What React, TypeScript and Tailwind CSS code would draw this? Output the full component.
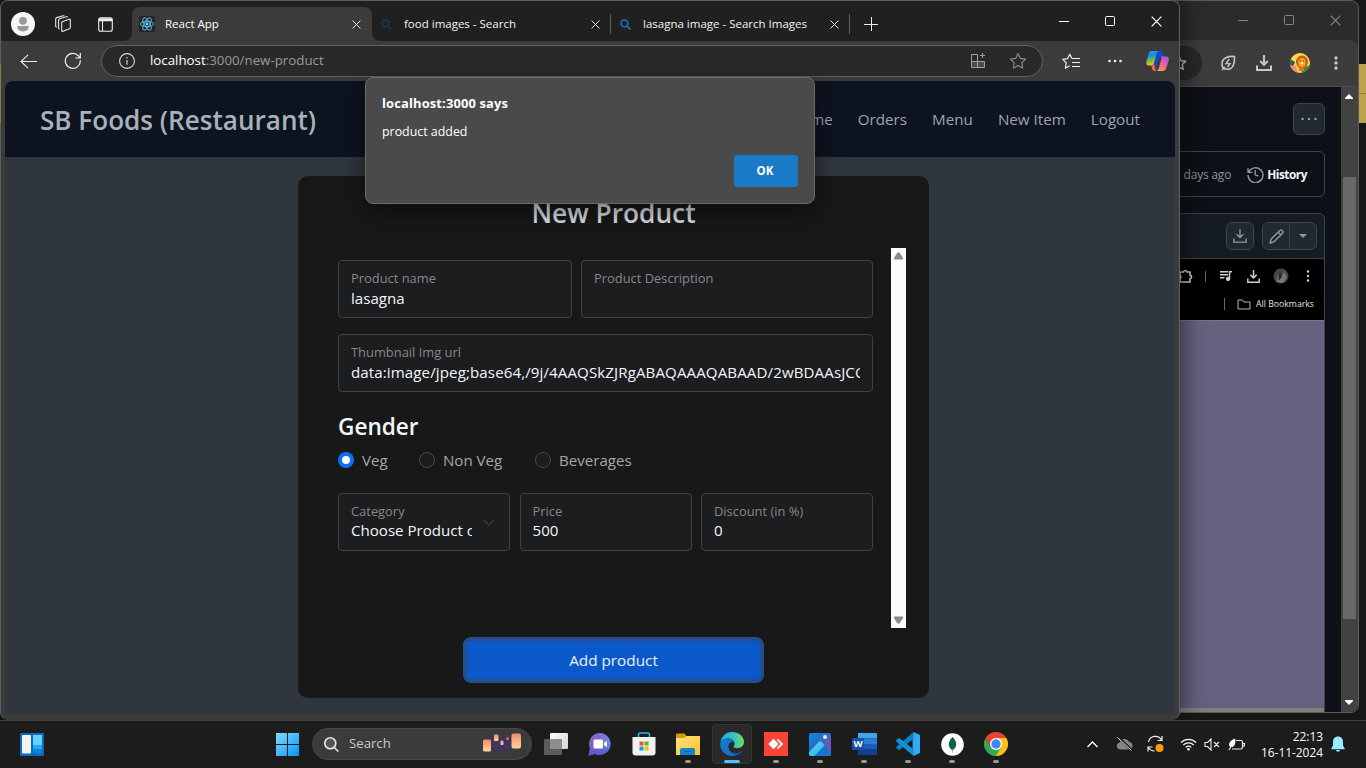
import React from "react";

type Kids = { children?: React.ReactNode };

const Cell = ({ w, children }: { w: string } & Kids) => (
  <div className={`${w} flex h-full shrink-0 items-center justify-center`}>{children}</div>
);

const Cross = ({ size = 10, color = "#e8e8e8" }: { size?: number; color?: string }) => (
  <svg width={size} height={size} viewBox="0 0 10 10" stroke={color} strokeWidth="1.1" fill="none">
    <path d="M.6.6l8.8 8.8M9.4.6L.6 9.4" />
  </svg>
);

const Magnifier = ({ color }: { color: string }) => (
  <svg width="11" height="11" viewBox="0 0 11 11" stroke={color} fill="none" strokeWidth="1.6">
    <circle cx="4.4" cy="4.4" r="3.4" />
    <path d="M7 7l3.4 3.4" />
  </svg>
);

const ReactLogo = () => (
  <svg width="16" height="16" viewBox="0 0 16 16">
    <rect width="16" height="16" rx="2" fill="#222428" />
    <g fill="none" stroke="#56b9d3" strokeWidth="1">
      <ellipse cx="8" cy="8" rx="6.8" ry="2.6" />
      <ellipse cx="8" cy="8" rx="6.8" ry="2.6" transform="rotate(60 8 8)" />
      <ellipse cx="8" cy="8" rx="6.8" ry="2.6" transform="rotate(120 8 8)" />
    </g>
    <circle cx="8" cy="8" r="1.4" fill="#61dafb" />
  </svg>
);

const Star = ({ color, size = 18, sw = 1.1 }: { color: string; size?: number; sw?: number }) => (
  <svg className="shrink-0" width={size} height={size} viewBox="0 0 18 18" fill="none" stroke={color} strokeWidth={sw} strokeLinejoin="round">
    <path d="M9 1.5l2.3 4.9 5.3.7-3.9 3.7 1 5.4L9 13.6l-4.7 2.6 1-5.4L1.4 7.1l5.3-.7z" />
  </svg>
);

const Dots = ({ color, vertical = false, gap = 5, r = 1.2 }: { color: string; vertical?: boolean; gap?: number; r?: number }) => (
  <svg width="18" height="18" viewBox="0 0 18 18" fill={color}>
    {[-gap, 0, gap].map((d) => (
      <circle key={d} cx={vertical ? 9 : 9 + d} cy={vertical ? 9 + d : 9} r={r} />
    ))}
  </svg>
);

const Download = ({ color, size = 16, sw = 1.7 }: { color: string; size?: number; sw?: number }) => (
  <svg width={size} height={size} viewBox="0 0 16 16" fill="none" stroke={color} strokeWidth={sw}>
    <path d="M8 0v9.6M4.2 6L8 9.8 11.8 6M1 10.5V15h14v-4.5" />
  </svg>
);

const WindowControls = ({ color }: { color: string }) => (
  <div className="flex h-[40px]">
    <Cell w="w-[46px]">
      <svg width="10" height="10" stroke={color}><path d="M0 5.5h10" /></svg>
    </Cell>
    <Cell w="w-[46px]">
      <svg width="10" height="10" fill="none" stroke={color}><rect x=".5" y=".5" width="9" height="9" rx="1" /></svg>
    </Cell>
    <Cell w="w-[46px]"><Cross color={color} size={11} /></Cell>
  </div>
);

const Copilot = () => (
  <svg width="23" height="22" viewBox="0 0 23 22">
    <defs>
      <linearGradient id="cpA" x1="0" y1="0" x2=".2" y2="1">
        <stop offset="0" stopColor="#15a0f0" /><stop offset=".35" stopColor="#1c8ddb" />
        <stop offset=".65" stopColor="#66b85c" /><stop offset="1" stopColor="#f5c400" />
      </linearGradient>
      <linearGradient id="cpB" x1=".8" y1="0" x2=".2" y2="1">
        <stop offset="0" stopColor="#a25ae8" /><stop offset=".5" stopColor="#ee5c9b" /><stop offset="1" stopColor="#ff9a52" />
      </linearGradient>
    </defs>
    <path d="M7 1h7.500c1.800 0 2.500 1 3 3l.6 2.500h-2c-2 0-3 1-3.500 2.700l-2.400 8.600C9.500 19 9 19.700 8 20z" fill="#1747c8" />
    <path d="M5.500 1H13c-1.600.4-2 1.500-2.500 3.100L8 13c-.6 2-1.500 2.500-3 2.500H2.500C.5 15.500-.1 13.500.5 11.300l2-7C3.100 2.200 4 1 5.500 1z" fill="url(#cpA)" />
    <path d="M5.500 15.500c1.500 0 2-1 2.500-2.300L9 18c.4 1.700 1 3 2 3H9c-2 0-2.700-1.200-3.200-3z" fill="#f0663d" />
    <path d="M16 6.500h4.500c2 0 2.800 1.800 2.200 4l-2.200 7C19.800 19.800 18.800 21 17 21h-6.500c1.500-.4 2-1.400 2.400-2.900l2.400-9c.3-1.400.2-2.200-1.300-2.600z" fill="url(#cpB)" />
  </svg>
);

const Tab = ({ icon, title, w }: { icon: React.ReactNode; title: string; w: string }) => (
  <div className={`${w} flex h-full shrink-0 items-center`}>
    <div className="flex w-[29px] shrink-0 justify-center">{icon}</div>
    <span className="ml-[3px] flex-1 whitespace-nowrap text-[11.500px] text-[#f2f2f2]">{title}</span>
    <Cross size={9} />
    <div className="ml-[10px] h-[20px] w-px bg-[#5e5e5e]" />
  </div>
);

const TabStrip = () => (
  <div className="flex h-[40px] shrink-0 items-start bg-[#202020]">
    <div className="flex h-[40px] items-center pl-[2px] pt-[6px]">
      <Cell w="w-[40px]">
        <svg width="24" height="24" viewBox="0 0 24 24">
          <circle cx="12" cy="12" r="12" fill="#f6f6f6" />
          <circle cx="12" cy="8.800" r="3.900" fill="#999" />
          <path d="M6.300 14h11.400c0 3.500-2 5.400-5.700 5.400S6.300 17.500 6.300 14z" fill="#999" />
        </svg>
      </Cell>
      <Cell w="w-[40px]">
        <svg width="18" height="18" viewBox="0 0 18 18" fill="none" stroke="#e6e6e6" strokeWidth="1.100" strokeLinejoin="round">
          <path d="M8.300 6.700l6.800-2.500c.7-.2 1.200.1 1.200.8v7.500c0 .6-.3 1-.9 1.200l-6.400 2.600c-.8.3-1.300 0-1.300-.8V7.800c0-.6.2-.9.600-1.100z" />
          <path d="M5.500 14l-.9-.6V5.100c0-.7.300-1.100.9-1.300L12.300 1.700c.6-.2 1 0 1.200.5" />
          <path d="M2.800 12.300l-1.100-.7V3.900c0-.7.300-1.100.9-1.300L9 .8c.6-.2 1.100 0 1.300.5" />
        </svg>
      </Cell>
      <Cell w="w-[44px]">
        <svg width="15" height="15" viewBox="0 0 15 15" fill="none" stroke="#f0f0f0">
          <rect x=".7" y=".7" width="13.600" height="13.600" rx="2" strokeWidth="1.100" />
          <path d="M1 2.700h13" strokeWidth="3" />
          <path d="M4.500 4v10" strokeWidth="1.100" />
        </svg>
      </Cell>
      <div className="w-[5px]" />
    </div>
    <div className="relative mt-[6px] flex h-[34px] w-[240px] shrink-0 items-center rounded-t-lg bg-[#3b3b3b]">
      <svg className="absolute -left-2 bottom-0" width="8" height="8"><path d="M8 0v8H0a8 8 0 0 0 8-8z" fill="#3b3b3b" /></svg>
      <svg className="absolute -right-2 bottom-0" width="8" height="8"><path d="M0 0v8h8a8 8 0 0 1-8-8z" fill="#3b3b3b" /></svg>
      <div className="ml-[7px]"><ReactLogo /></div>
      <span className="ml-[10px] flex-1 text-[11.500px] text-white">React App</span>
      <div className="mr-[11px]"><Cross size={9} /></div>
    </div>
    <div className="flex h-[40px] items-center pt-[6px]">
      <Tab w="w-[239px]" icon={<Magnifier color="#173d61" />} title="food images - Search" />
      <Tab w="w-[239px]" icon={<Magnifier color="#1677cf" />} title="lasagna image - Search Images" />
      <Cell w="w-[42px]">
        <svg width="14" height="14" stroke="#eee"><path d="M0 7.500h14M7.500 0v14" /></svg>
      </Cell>
    </div>
    <div className="ml-auto flex"><WindowControls color="#fff" /></div>
  </div>
);

const Toolbar = () => (
  <div className="flex h-[40px] shrink-0 items-center bg-[#3b3b3b]">
    <Cell w="w-[54px]">
      <svg width="17" height="15" viewBox="0 0 17 15" fill="none" stroke="#eee" strokeWidth="1.100">
        <path d="M17 7.500H1M8 .8L1 7.500l7 6.700" />
      </svg>
    </Cell>
    <Cell w="w-[36px]">
      <svg width="18" height="18" viewBox="0 0 18 18" fill="none" stroke="#eee" strokeWidth="1.200">
        <path d="M16.300 8.300A7.500 7.500 0 1 1 14.500 4L16 5.700M16.300 1v5h-5" />
      </svg>
    </Cell>
    <div className="ml-[10px] flex h-[32px] w-[942px] shrink-0 items-center rounded-full border border-[#636363] bg-[#292929]">
      <svg className="ml-[17px]" width="16" height="16" viewBox="0 0 16 16" fill="none" stroke="#ddd" strokeWidth="1.100">
        <circle cx="8" cy="8" r="7.400" /><path d="M8 7v4.800" /><path d="M8 4v1.500" />
      </svg>
      <span className="ml-[15px] flex-1 text-[13.300px] text-[#9a9a9a]"><span className="text-white">localhost</span>:3000/new-product</span>
      <svg width="16" height="16" viewBox="0 0 16 16" fill="none" stroke="#a0a0a0">
        <path d="M7.500 1.500h-6v13h13v-6h-13M7.500 1.500v13M12.500 0v5M10 2.500h5" />
        <rect x="2" y="9" width="12" height="5" fill="#4b4b4b" stroke="none" />
        <path d="M7.500 8.500v6" />
      </svg>
      <div className="ml-[23px] mr-[15px]"><Star color="#8b8b8b" /></div>
    </div>
    <Cell w="w-[56px]">
      <svg width="18" height="17" viewBox="0 0 18 17" fill="none" stroke="#f0f0f0" strokeWidth="1.200" strokeLinejoin="round">
        <path d="M10 5.500L7.800 1.200 5.500 5.700l-4.700.7 3.400 3.300-.8 5.500 4.300-2.500M10 5.500h8M10 9.500h8M10 13.500h8" />
      </svg>
    </Cell>
    <Cell w="w-[32px]"><Dots color="#f0f0f0" gap={5.500} r={1.300} /></Cell>
    <Cell w="w-[48px]"><div className="ml-[4px]"><Copilot /></div></Cell>
  </div>
);

type FieldProps = { label: string; value?: string; w: string; select?: boolean; tight?: boolean; wide?: boolean };

const Field = ({ label, value, w, select = false, tight = false, wide = false }: FieldProps) => (
  <div className={`${w} flex h-[58px] items-center rounded-[4px] border border-[#3f4245] bg-[#1c1d1f] px-[12px]`}>
    <div className="h-full min-w-0 flex-1 overflow-hidden whitespace-nowrap pt-[7px]">
      <div className={`${tight ? "h-[19px]" : "h-[20px]"} text-[12.900px] leading-[20px] text-[#85888b]`}>{label}</div>
      <div className={`${wide ? "tracking-[0.100px]" : ""} h-[22px] overflow-hidden text-[15.100px] leading-[21px] text-[#f3f6f9]`}>{value}</div>
    </div>
    {select && (
      <svg className="ml-[11px] mr-[2px]" width="12" height="7" viewBox="0 0 12 7" fill="none" stroke="#393c40" strokeWidth="1.400">
        <path d="M.8.8L6 6 11.200.8" />
      </svg>
    )}
  </div>
);

const Radio = ({ label, on = false, w }: { label: string; on?: boolean; w: string }) => (
  <label className={`${w} flex items-center gap-[8px] whitespace-nowrap text-[15.100px] text-[#a2a8ae]`}>
    <span className={on ? "flex size-4 items-center justify-center rounded-full bg-[#0d6efd]" : "flex size-4 rounded-full border border-[#45484b] bg-[#1c1d1f]"}>
      {on && <span className="size-2 rounded-full bg-white" />}
    </span>
    {label}
  </label>
);

const ProductForm = () => (
  <div className="flex h-[522px] w-[631px] flex-col items-center rounded-[10px] bg-[#181818]">
    <h2 className="mt-[18px] h-[38px] text-[26.300px] font-semibold leading-[38px] text-[#dee2e6]">New Product</h2>
    <div className="mt-[16px] flex w-full pl-[40px]">
      <div className="w-[535px] pt-[12px]">
        <div className="flex justify-between">
          <Field label="Product name" value="lasagna" w="w-[234px]" />
          <Field label="Product Description" w="w-[292px]" />
        </div>
        <div className="mt-[16px] flex">
          <Field label="Thumbnail Img url" value="data:image/jpeg;base64,/9j/4AAQSkZJRgABAQAAAQABAAD/2wBDAAsJCQcJ" w="w-full" wide />
        </div>
        <h3 className="mt-[20px] h-[30px] text-[22.600px] font-semibold leading-[30px] text-[#f3f6f9]">Gender</h3>
        <div className="mt-[6px] flex h-[24px] items-center">
          <Radio label="Veg" on w="w-[81px]" />
          <Radio label="Non Veg" w="w-[116px]" />
          <Radio label="Beverages" w="w-[120px]" />
        </div>
        <div className="mt-[21px] flex justify-between">
          <Field label="Category" value="Choose Product category" w="w-[172px]" select tight />
          <Field label="Price" value="500" w="w-[172px]" tight />
          <Field label="Discount (in %)" value="0" w="w-[172px]" tight />
        </div>
      </div>
      <div className="ml-[18px] flex h-[380px] w-[15px] flex-col items-center justify-between bg-[#fcfcfc] py-[4px]">
        <svg width="9" height="8"><path d="M3.500.5h2L9 6v1.500H0V6z" fill="#8b8b8b" /></svg>
        <svg width="9" height="8"><path d="M3.500 7.500h2L9 2V.5H0V2z" fill="#8b8b8b" /></svg>
      </div>
    </div>
    <button className="mt-[9px] h-[46px] w-[301px] rounded-[8px] border-4 border-[#254e8c] bg-[#0a58ca] text-[15.300px] text-[#eaf1fb]">Add product</button>
  </div>
);

const Alert = () => (
  <div className="absolute left-[364px] top-[76px] flex h-[127px] w-[450px] flex-col rounded-[8px] border border-[#6b6b6b] bg-[#4a4a4a] px-[16px] text-[12.400px] text-white shadow-[0_8px_24px_rgba(0,0,0,0.5)]">
    <div className="mt-[15px] h-[20px] text-[12.900px] font-bold leading-[20px] tracking-[0.150px]">localhost:3000 says</div>
    <div className="mt-[9px] h-[20px] leading-[20px]">product added</div>
    <button className="mt-[13px] h-[32px] w-[64px] self-end rounded-[3px] bg-[#1b7ac5] pr-[2px] text-[11.500px] font-bold">OK</button>
  </div>
);

const EdgeWindow = () => (
  <section className="absolute left-0 top-0 flex h-[720px] w-[1180px] flex-col rounded-[8px] border border-[#5f5f5f] border-b-[#3b3b3b] bg-[#3b3b3b] shadow-[4px_0_22px_rgba(0,0,0,0.5)]">
    <div className="flex flex-col overflow-hidden rounded-t-[7px]">
      <TabStrip />
      <Toolbar />
    </div>
    <main className="mx-[4px] flex h-[634px] flex-col overflow-hidden rounded-[8px] bg-[#30363d]">
      <header className="flex h-[76px] shrink-0 items-center justify-between bg-[#0d131f] pl-[35px] pr-[35px]">
        <h1 className="pt-[3px] text-[26.100px] font-semibold text-[#a9b1ba]">SB Foods (Restaurant)</h1>
        <nav className="flex gap-[25px] text-[15.200px] text-[#9ca4ae]">
          <a>Home</a><a>Orders</a><a>Menu</a><a>New Item</a><a>Logout</a>
        </nav>
      </header>
      <div className="flex pl-[293px] pt-[19px]"><ProductForm /></div>
    </main>
    <Alert />
  </section>
);

const LionAvatar = () => (
  <svg width="20" height="20" viewBox="0 0 20 20">
    <defs><clipPath id="lc"><circle cx="10" cy="10" r="10" /></clipPath></defs>
    <g clipPath="url(#lc)">
      <rect width="20" height="20" fill="#ffd45a" />
      <path d="M0 6l5 3-2 5-3-1z" fill="#17683c" /><path d="M0 12l6 1 2 7H0z" fill="#ef8c85" />
      <path d="M13 15l7-3v8h-9z" fill="#2f8a46" />
      <ellipse cx="12" cy="9" rx="6" ry="6.500" fill="#c65f08" />
      <ellipse cx="12" cy="9.500" rx="3.700" ry="4.500" fill="#f4a51f" />
      <path d="M10.500 9h3L12 12z" fill="#fff" /><path d="M10 8h1M13 8h1" stroke="#432" />
      <path d="M9 15h5v3H9z" fill="#df7a0b" />
    </g>
  </svg>
);

const ChromeWindow = () => (
  <section className="absolute left-[1100px] top-0 flex h-[713px] w-[259px] flex-col overflow-hidden rounded-[8px] border border-[#5c5c5c] bg-[#2b2b2b]">
    <div className="flex h-[39px] shrink-0 justify-end"><div className="-mt-px"><WindowControls color="#858585" /></div></div>
    <div className="flex h-[47px] shrink-0 items-center rounded-t-[8px] border-b border-[#4d4d4d] bg-[#3c3c3c]">
      <div className="flex h-[34px] w-[101px] items-center justify-end rounded-full bg-[#282828] pr-[15px]"><Star color="#c7c7c7" size={16} sw={1.600} /></div>
      <Cell w="w-[52px]">
        <svg width="16" height="16" viewBox="0 0 16 16" fill="none" stroke="#c7c7c7" strokeWidth="1.600">
          <path d="M14.500 1.500C8 1 2 3 2 9c0 3 2 5.300 5.400 5.300 5.800 0 7.400-5.800 7.100-12.800zM2 15l3-3" />
          <path d="M9.200 4L6 8.600h4L7.500 12" strokeWidth="1.400" />
        </svg>
      </Cell>
      <div className="w-[1px]" />
      <Cell w="w-[18px]"><Download color="#c7c7c7" sw={2} /></Cell>
      <Cell w="w-[54px]"><LionAvatar /></Cell>
      <Cell w="w-[18px]"><Dots color="#c7c7c7" vertical r={1.700} /></Cell>
    </div>
    <div className="flex flex-1 bg-[#0d1117]">
      <div className="flex w-[240px] shrink-0 flex-col pr-[16px] pt-[16px]">
        <div className="flex size-[32px] items-center justify-center self-end rounded-[6px] border border-[#3d444d] bg-[#212830]"><Dots color="#9198a1" gap={6.500} r={1.300} /></div>
        <div className="mt-[16px] flex h-[46px] items-center justify-end rounded-[6px] border border-[#3d444d] pr-[17px] text-[11.900px]">
          <span className="mr-[16px] pt-px tracking-[-0.150px] text-[#8b929b]">days ago</span>
          <svg width="17" height="17" viewBox="0 0 16 16" fill="none" stroke="#8b929b" strokeWidth="1.400">
            <path d="M1.500 6A7 7 0 1 1 1 8.500M1 2v4h4M7.800 4v4.300l3 1.200" />
          </svg>
          <span className="ml-[3px] pt-px font-bold tracking-[-0.500px] text-[#f0f6fc]">History</span>
        </div>
        <div className="mt-[16px] flex h-[500px] flex-col rounded-t-[6px] border border-[#3d444d] bg-[#151b23]">
          <div className="flex h-[45px] shrink-0 items-center justify-end border-b border-[#3d444d] pr-[7px]">
            <div className="flex size-[28px] items-center justify-center rounded-[6px] border border-[#3d444d] bg-[#212830]"><Download color="#9198a1" size={14} sw={1.500} /></div>
            <div className="ml-[8px] flex h-[28px] w-[55px] rounded-[6px] border border-[#3d444d] bg-[#212830]">
              <div className="flex w-[27px] items-center justify-center border-r border-[#3d444d]">
                <svg width="15" height="15" viewBox="0 0 15 15" fill="none" stroke="#9198a1" strokeWidth="1.400" strokeLinejoin="round">
                  <path d="M1 14l1.200-4L10.800 1.400a1.500 1.500 0 0 1 2.200 0l.6.6a1.500 1.500 0 0 1 0 2.200L5 12.800zM9 3l3 3" />
                </svg>
              </div>
              <div className="flex flex-1 items-center justify-center"><svg width="8" height="4"><path d="M0 0h8L4 4z" fill="#9198a1" /></svg></div>
            </div>
          </div>
          <div className="flex h-[61px] shrink-0 flex-col rounded-tr-[4px] bg-black">
            <div className="flex h-[34px] items-center justify-end pr-[7px]">
              <svg width="14" height="14" viewBox="0 0 14 14" fill="none" stroke="#cfcfcf" strokeWidth="1.500">
                <path d="M1 4V3h3.500a1.800 1.800 0 0 1 3.500 0h3v3.200a1.600 1.600 0 0 1 0 3.200V13H1V9.500a1.700 1.700 0 0 0 0-3z" />
              </svg>
              <div className="ml-[12px] mr-[14px] h-[11px] w-px bg-[#666]" />
              <svg width="12" height="12" viewBox="0 0 12 12" fill="none" stroke="#cfcfcf" strokeWidth="1.500">
                <path d="M0 1.700h8M0 4.700h8M0 7.700h4.500M9.500 9V1.700H12" /><circle cx="8" cy="9" r="1.400" fill="#cfcfcf" />
              </svg>
              <div className="ml-[15px]"><Download color="#cfcfcf" size={13} sw={1.800} /></div>
              <svg className="ml-[13px] mr-[10px]" width="16" height="16">
                <circle cx="8" cy="8" r="7.500" fill="#474747" /><path d="M3 14l2-7 3 3 3-6 3 5-4 6z" fill="#777" /><path d="M7 3l2 6-4 4z" fill="#292929" />
              </svg>
              <Dots color="#cfcfcf" vertical gap={4.500} r={1.200} />
            </div>
            <div className="flex h-[22px] items-center justify-end pr-[10px] text-[8.700px] text-[#e2e2e2]">
              <div className="mr-[12px] h-[12px] w-px bg-[#666]" />
              <svg width="14" height="11" viewBox="0 0 14 11" fill="none" stroke="#b5b5b5"><path d="M1 1h4.500l1.500 2h6v7H1z" /></svg>
              <span className="ml-[5px] pt-px">All Bookmarks</span>
            </div>
          </div>
          <div className="h-[388px] shrink-0 border-t border-[#777] bg-[#66617f]" />
          <div className="h-[5px] bg-[#7f7f7f]" />
        </div>
      </div>
      <div className="flex flex-1 flex-col items-center bg-[#424242] pt-[7px]">
        <svg className="mr-[2px]" width="8" height="5"><path d="M4 0l4 4v1H0V4z" fill="#fff" /></svg>
        <div className="mt-[78px] h-[442px] w-[13px] bg-[#686868]" />
        <svg className="mr-[2px] mt-[81px]" width="8" height="5"><path d="M4 5l4-4V0H0v1z" fill="#fff" /></svg>
      </div>
    </div>
  </section>
);

const TaskItem = ({ children, running = false, active = false }: { running?: boolean; active?: boolean } & Kids) => (
  <div className="flex h-[46px] w-[44px] shrink-0 items-center justify-center">
    <div className={active ? "relative flex size-[40px] items-center justify-center rounded-[4px] border border-[#343434] bg-[#292929]" : "relative flex size-[40px] items-center justify-center"}>
      {children}
      {running && <span className={active ? "absolute bottom-0 h-[3px] w-[16px] rounded-full bg-[#4cc2ff]" : "absolute bottom-px h-[3px] w-[6px] rounded-full bg-[#999]"} />}
    </div>
  </div>
);

const TaskApps = () => (
  <>
    <TaskItem>
      <svg width="24" height="22"><defs><linearGradient id="tv" x1="0" y1="0" x2="1" y2="1"><stop stopColor="#fff" /><stop offset="1" stopColor="#d2d2d2" /></linearGradient></defs>
        <rect x="6" width="18" height="16" rx="1" fill="url(#tv)" /><rect y="6" width="18" height="16" rx="1" fill="#5b5b5b" /><path d="M6 6h12v10H6z" fill="#8d8d8d" /></svg>
    </TaskItem>
    <TaskItem>
      <svg width="24" height="24" viewBox="0 0 24 24"><defs><linearGradient id="tm" x1="0" y1="0" x2="1" y2="0"><stop stopColor="#9160bb" /><stop offset=".5" stopColor="#7a70cb" /><stop offset="1" stopColor="#6d8ce1" /></linearGradient><linearGradient id="tn" x1="0" y1="0" x2="0" y2="1"><stop offset=".4" stopColor="#5558d0" stopOpacity="0" /><stop offset="1" stopColor="#5558d0" /></linearGradient></defs>
        <path d="M12 1a11 11 0 1 1-5 21L.5 23.500l1.500-7A11 11 0 0 1 12 1z" fill="url(#tm)" /><path d="M12 1a11 11 0 1 1-5 21L.5 23.500l1.500-7A11 11 0 0 1 12 1z" fill="url(#tn)" />
        <rect x="5.500" y="7.500" width="9.500" height="9" rx="1.500" fill="#fff" /><path d="M16 11l2.800-2.300v6.600L16 13z" fill="#fff" /></svg>
    </TaskItem>
    <TaskItem>
      <svg width="24" height="24" viewBox="0 0 24 24"><path d="M6.500 6V2.500c0-1 .5-1.500 1.500-1.500h8c1 0 1.500.5 1.500 1.500V6" fill="none" stroke="#2eb4ea" strokeWidth="1.600" />
        <path d="M.5 5h23v15.500c0 2-1 3-3 3h-17c-2 0-3-1-3-3z" fill="#f1f1f1" />
        <path d="M7.500 9.500h4v4h-4z" fill="#f25022" /><path d="M12.500 9.500h4v4h-4z" fill="#6bb700" /><path d="M7.500 14.500h4v4h-4z" fill="#00a4ef" /><path d="M12.500 14.500h4v4h-4z" fill="#ffb900" /></svg>
    </TaskItem>
    <TaskItem running>
      <svg width="24" height="22"><defs><linearGradient id="fe" x1="0" y1="0" x2="1" y2="1"><stop stopColor="#ffe184" /><stop offset="1" stopColor="#ffc32a" /></linearGradient></defs>
        <path d="M0 2c0-1 .5-1.500 1.500-1.500h7L10.500 3v4H0z" fill="#d99b06" /><path d="M0 5h8l2.500-2H24v19H0z" fill="url(#fe)" /><path d="M4 22v-5c0-1.500 1-2 2-2h11c1.500 0 2 .5 2 2v5z" fill="#1386d3" /><path d="M8 18.500h7" stroke="#085da8" /></svg>
    </TaskItem>
    <TaskItem running active>
      <svg width="24" height="24" viewBox="0 0 24 24"><defs><linearGradient id="ea" x1="0" y1="0" x2="1" y2="0"><stop stopColor="#20a9e8" /><stop offset=".6" stopColor="#36c6bd" /><stop offset="1" stopColor="#70e050" /></linearGradient><linearGradient id="eb" x1="0" y1="0" x2="1" y2="1"><stop stopColor="#1683d8" /><stop offset="1" stopColor="#0d57a4" /></linearGradient></defs>
        <path d="M.3 11C1 4.500 6 0 12 0c7 0 12 5 12 9.800 0 4-3 6.400-6.700 6.400-2.300 0-3.800-.7-3.800-1.700 0-.7 1.100-1.200 1.100-3C14.600 8.500 11.500 6.500 8 6.500 4.500 6.500 1.500 8 .3 11z" fill="url(#ea)" />
        <path d="M.3 11C1.500 8 4.600 6.500 8 6.500c3.500 0 6.600 2 6.600 5-.6-1.200-1.600-1.800-2.800-1.600-3 .4-4.400 4-2.600 7.600 2.300 4.500 8 5 13.500 1.300C20.600 22 16.800 24 12.500 24 5 24-.6 18 .3 11z" fill="url(#eb)" />
        <path d="M8 10.500c-2.500 4.500.5 10.500 7 12.800-6.500 2-13-3-13-8.300C2 12 5 10.300 8 10.500z" fill="#1979c9" opacity=".6" /></svg>
    </TaskItem>
    <TaskItem running>
      <svg width="24" height="24"><rect width="24" height="24" fill="#f94336" /><path d="M9.500 6.800l5.200 5.200-5.200 5.200L4.300 12z" fill="#fff" /><path d="M13.300 7.300L18 12l-4.700 4.700" fill="none" stroke="#fff" strokeWidth="1.800" /></svg>
    </TaskItem>
    <TaskItem running>
      <svg width="22" height="23" viewBox="0 0 22 23"><defs><linearGradient id="ph" x1="0" y1="0" x2="1" y2="1"><stop stopColor="#0d86dd" /><stop offset=".4" stopColor="#2670ca" /><stop offset=".7" stopColor="#7b51b5" /></linearGradient><linearGradient id="pi" x1="0" y1="0" x2="1" y2="1"><stop stopColor="#5de1f6" /><stop offset="1" stopColor="#24a7ec" /></linearGradient></defs>
        <rect width="22" height="23" rx="2" fill="url(#ph)" /><path d="M13 8.800L22 19v2c0 1.200-.8 2-2 2H5z" fill="#1574cc" /><path d="M0 19.500L9.500 9.200c1.100-1.200 2.400-1.200 3.500 0l2.800 3L5.500 23H2c-1.200 0-2-.8-2-2z" fill="url(#pi)" /><circle cx="16" cy="4" r="2" fill="#dff2ff" /></svg>
    </TaskItem>
    <TaskItem running>
      <svg width="25" height="22" viewBox="0 0 25 22"><path d="M6 0h18c.6 0 1 .4 1 1v4.500H6z" fill="#41a5ee" /><path d="M6 5.500h19V11H6z" fill="#2b7cd3" /><path d="M6 11h19v5.500H6z" fill="#185abd" /><path d="M6 16.500h19V21c0 .6-.4 1-1 1H6z" fill="#103f91" /><rect y="5" width="12" height="12" rx="1" fill="#174fa9" />
        <text x="6" y="14.300" textAnchor="middle" fontFamily="Open Sans" fontWeight="700" fontSize="9.500" fill="#fff">W</text></svg>
    </TaskItem>
    <TaskItem running>
      <svg width="24" height="24" viewBox="0 0 24 24"><path d="M17.500 0L24 3v18l-6.500 3-.9-5.600V5.800z" fill="#32a9f2" /><path d="M17.500 0v6.800L3.200 18.200.3 16.300v-1.500z" fill="#0b80c5" /><path d="M17.500 24v-6.800L3.200 6 .3 7.800v1.600z" fill="#138fd9" /></svg>
    </TaskItem>
    <TaskItem running>
      <svg width="23" height="23"><circle cx="11.500" cy="11.500" r="11.300" fill="#fff" /><path d="M11.500 4c5 5 5 9.500 0 13.500-5-4-5-8.500 0-13.500z" fill="#116149" /><path d="M11.500 16v3.500" stroke="#8da596" strokeWidth=".8" /></svg>
    </TaskItem>
    <TaskItem running>
      <svg width="24" height="24" viewBox="0 0 24 24"><path d="M12 12h-.1L12 24A12 12 0 0 0 22.400 6H12z" fill="#fbc116" /><path d="M12 12L6.800 15 1.600 6A12 12 0 0 0 12 24l5.200-9z" fill="#34a853" /><path d="M1.600 6A12 12 0 0 1 22.400 6H12v6l-5.200 3z" fill="#ea4335" /><circle cx="12" cy="12" r="6" fill="#fff" /><circle cx="12" cy="12" r="4.700" fill="#4285f4" /></svg>
    </TaskItem>
  </>
);

const Lanterns = () => (
  <svg width="42" height="24" viewBox="0 0 42 24">
    <defs><linearGradient id="ln" x1="0" y1="0" x2="0" y2="1"><stop stopColor="#ee8c69" /><stop offset="1" stopColor="#ffd59b" /></linearGradient><radialGradient id="lp"><stop stopColor="#47306e" /><stop offset="1" stopColor="#3b3b3b" /></radialGradient></defs>
    <ellipse cx="20" cy="12" rx="20" ry="11" fill="url(#lp)" />
    <rect x="1" y="7.500" width="8" height="12" rx="1.500" fill="url(#ln)" /><rect x="12" y="2.500" width="4.500" height="6.500" rx="1" fill="url(#ln)" /><rect x="18.500" y="8.500" width="3" height="4.500" rx="1" fill="url(#ln)" /><rect x="24.500" y="5.500" width="2" height="2.500" fill="#d9946f" /><rect x="29.500" y="1.500" width="9.500" height="15" rx="2" fill="url(#ln)" />
  </svg>
);

const Taskbar = () => (
  <footer className="absolute left-0 top-[720px] flex h-[48px] w-[1366px] items-center border-t border-[#404040] bg-[#1c1c1c] pb-px">
    <svg className="ml-[20px]" width="24" height="23"><rect width="24" height="23" rx="1" fill="#086bbd" /><rect x="2" y="2" width="9" height="18.500" rx="1" fill="#f3f3f3" /><path d="M13 2h9v10h-9z" fill="#65d2ff" /><path d="M13 12h9v4.500h-9z" fill="#1ba8f6" /><path d="M13 16.500h9v4h-9z" fill="#0b83df" /></svg>
    <svg className="ml-[231px]" width="24" height="24"><defs><linearGradient id="wn" x1="0" y1="0" x2="1" y2="1"><stop stopColor="#82dcff" /><stop offset="1" stopColor="#0793f3" /></linearGradient></defs><path d="M1 1h11v11H1zM13 1h11v11H13zM1 13h11v11H1zM13 13h11v11H13z" fill="url(#wn)" /></svg>
    <div className="ml-[13px] flex h-[32px] w-[220px] items-center rounded-full border border-[#494949] bg-[#3b3b3b]">
      <svg className="ml-[11px]" width="15" height="15" viewBox="0 0 15 15" fill="#555" stroke="#e6e6e6" strokeWidth="1.600"><circle cx="6.300" cy="6.300" r="5.500" /><path d="M10.300 10.500l4 4" /></svg>
      <span className="ml-[10px] flex-1 text-[13.200px] text-[#c9c9c9]">Search</span>
      <div className="mr-[7px] h-[24px]"><Lanterns /></div>
    </div>
    <div className="ml-[2px] flex"><TaskApps /></div>
    <div className="ml-auto flex h-full items-center">
      <Cell w="w-[32px]"><svg width="11" height="7" fill="none" stroke="#fff" strokeWidth="1.300"><path d="M.5 6l5-5 5 5" /></svg></Cell>
      <Cell w="w-[32px]"><svg width="17" height="14" viewBox="0 0 17 14"><path d="M4 12.500a3.600 3.600 0 0 1-.3-7.100A5 5 0 0 1 13 5a3.800 3.800 0 0 1 .5 7.500z" fill="#858585" /><path d="M2 0l14 13.500" stroke="#1c1c1c" strokeWidth="2.500" /><path d="M1.500.5l14 13" stroke="#e0e0e0" /></svg></Cell>
      <Cell w="w-[32px]"><svg width="18" height="18" viewBox="0 0 18 18" fill="none" stroke="#eee" strokeWidth="1.200"><path d="M1.500 7a7 7 0 0 1 13-2M15 1v4.500h-4.500M1.500 12.500a7 7 0 0 0 6 3.500M1 16.500v-4.500h4.500" /><circle cx="12.500" cy="13" r="4" fill="#ff9a0b" stroke="none" /></svg></Cell>
      <Cell w="w-[32px]"><svg width="17" height="13" viewBox="0 0 17 13" fill="none" stroke="#f2f2f2" strokeWidth="1.300"><path d="M1 4.500a10.500 10.500 0 0 1 15 0M3.300 7a7.200 7.200 0 0 1 10.400 0M5.700 9.400a4 4 0 0 1 5.600 0" /><circle cx="8.500" cy="11.300" r="1.300" fill="#fff" stroke="none" /></svg></Cell>
      <Cell w="w-[16px]"><svg width="16" height="13" viewBox="0 0 16 13" fill="none" stroke="#eee" strokeWidth="1.100"><path d="M1 4.500h2.500L7 1v11L3.500 8.500H1zM10 4l5 5M15 4l-5 5" /></svg></Cell>
      <Cell w="w-[32px]"><svg width="17" height="13" viewBox="0 0 17 13" fill="none" stroke="#eee" strokeWidth="1.200"><path d="M8 2.500h5c1 0 1.500.5 1.500 1.500v5.500c0 1-.5 1.500-1.500 1.500H4M15 5.500h1.500v2.500H15" /><path d="M1 7c0-3 2-5 6-6.500C8 4 7 8.500 4 9c-1.500.2-3-.7-3-2z" fill="#fff" stroke="none" /><path d="M1 12l3-5" /></svg></Cell>
      <div className="ml-[6px] w-[65px] text-right text-[11.900px] leading-[16px] text-white">22:13<br /><span className="whitespace-nowrap">16-11-2024</span></div>
      <svg className="ml-[8px] mr-[21px]" width="14" height="16" viewBox="0 0 14 16" fill="#99ebff"><path d="M7 .5c3 0 5 2.200 5 5v4l1.700 3v.7H.3v-.7L2 9.500v-4c0-2.800 2-5 5-5zM5 14h4c0 1-1 1.700-2 1.700S5 15 5 14z" /></svg>
    </div>
  </footer>
);

export default function App() {
  return (
    <div className="relative h-[768px] w-[1366px] overflow-hidden bg-[#171717] font-['Open_Sans','Noto_Sans',sans-serif]">
      <div className="absolute right-0 top-[64px] flex h-[59px] w-[12px] flex-col bg-[#bba24c]"><div className="mt-[29px] h-px bg-[#987a32]" /></div>
      <ChromeWindow />
      <EdgeWindow />
      <div className="absolute left-0 top-[64px] h-[59px] w-px bg-[#8d7b41]" />
      <Taskbar />
    </div>
  );
}
